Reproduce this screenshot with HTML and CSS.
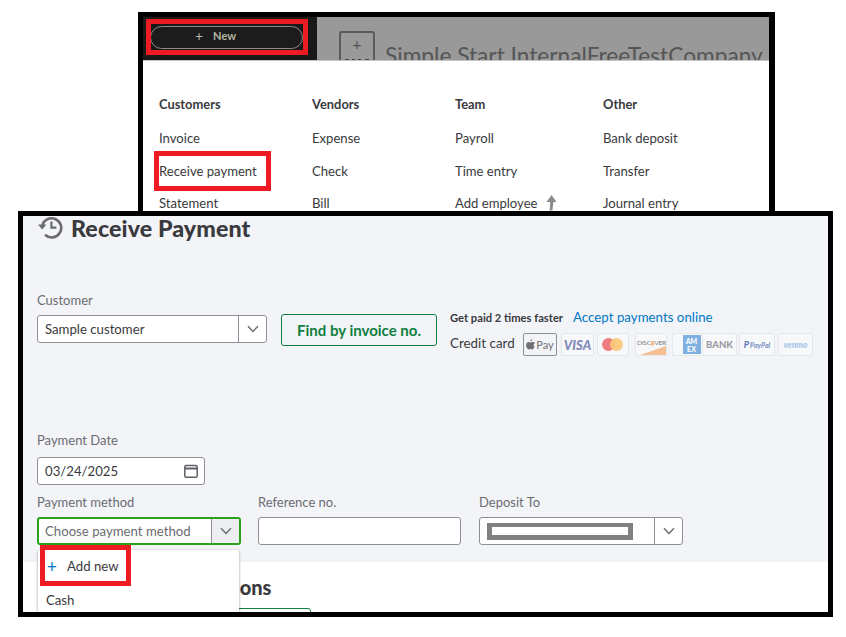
FILE: index.html
```html
<!DOCTYPE html>
<html lang="en">
<head>
<meta charset="utf-8">
<title>Receive Payment</title>
<link rel="stylesheet" href="styles.css">
</head>
<body>
<div class="canvas">
  <section class="window window-top">
    <header class="topbar">
      <div class="new-zone">
        <div class="new-pill"><span class="new-plus">+</span><span>New</span></div>
      </div>
      <div class="company-zone">
        <div class="logo-box"><span class="logo-plus">+</span><span class="logo-dots"></span></div>
        <div class="company-name">Simple Start InternalFreeTestCompany</div>
      </div>
    </header>
    <div class="menu">
      <div class="menu-col col-customers">
        <h3>Customers</h3>
        <p>Invoice</p><p>Receive payment</p><p>Statement</p>
      </div>
      <div class="menu-col col-vendors">
        <h3>Vendors</h3>
        <p>Expense</p><p>Check</p><p>Bill</p>
      </div>
      <div class="menu-col col-team">
        <h3>Team</h3>
        <p>Payroll</p><p>Time entry</p>
        <p class="with-arrow">Add employee
          <svg class="up-arrow" viewBox="0 0 12 16" width="12" height="16"><path d="M6.500 0 11.500 7H8.400L7.400 15.500H4.600L5.200 7H1.500Z" fill="#8b8b8b"/></svg>
        </p>
      </div>
      <div class="menu-col">
        <h3>Other</h3>
        <p>Bank deposit</p><p>Transfer</p><p>Journal entry</p>
      </div>
    </div>
    <div class="mark mark-new"></div>
    <div class="mark mark-receive"></div>
  </section>

  <section class="window window-bottom">
    <div class="form-area">
      <div class="title-row">
        <svg class="history" viewBox="0 0 26 26" width="26" height="26" fill="none" stroke="#6b6c72" stroke-width="2.600">
          <path d="M5.200 11A9.600 9.600 0 1 1 8 19.800"/>
          <path d="M1 9.500h8.400L5.200 14.600Z" fill="#6b6c72" stroke="none"/>
          <path d="M14.400 6.500v6.200h5" stroke-width="2.200"/>
        </svg>
        <h1>Receive Payment</h1>
      </div>

      <div class="row row-customer">
        <div class="field">
          <label>Customer</label>
          <div class="control select w230">
            <span class="value">Sample customer</span>
            <span class="caret"><svg viewBox="0 0 12 8" width="12" height="8"><path d="M1 1.200 6 6.400l5-5.200" fill="none" stroke="#6b6c72" stroke-width="1.400"/></svg></span>
          </div>
        </div>
        <button class="find-btn">Find by invoice no.</button>
        <div class="pay-info">
          <div class="pay-top"><span class="faster">Get paid 2 times faster</span><a class="accept">Accept payments online</a></div>
          <div class="pay-bottom">
            <span class="cc">Credit card</span>
            <div class="logos">
              <span class="card card-apple"><svg viewBox="0 0 10 12" width="9" height="11"><path d="M7 0c.100 1.300-1 2.500-2.200 2.500C4.600 1.300 5.800.100 7 0ZM9.600 8.500c-.600 1.500-1.500 3-2.600 3-.800 0-1.100-.500-2-.500s-1.200.500-2 .500C1.600 11.500.100 8.900.100 6.800c0-2.200 1.400-3.500 2.900-3.500.900 0 1.500.600 2.100.600.600 0 1.300-.700 2.400-.600.500 0 1.700.200 2.300 1.300-1.900 1.200-1.600 3.400-.200 3.900Z" fill="#6f7075"/></svg>Pay</span>
              <span class="card card-visa">VISA</span>
              <span class="card card-mc"><i class="mc-red"></i><i class="mc-yellow"></i></span>
              <span class="card card-disc">DISC<b class="dot"></b>VER<i class="disc-swoosh"></i></span>
              <span class="card card-amex"><i class="amex-box">AM<br>EX</i></span>
              <span class="card card-bank">BANK</span>
              <span class="card card-paypal"><b>P</b>PayPal</span>
              <span class="card card-venmo">venmo</span>
            </div>
          </div>
        </div>
      </div>

      <div class="field field-date">
        <label>Payment Date</label>
        <div class="control date">
          <span class="value">03/24/2025</span>
          <svg class="cal" viewBox="0 0 14 14" width="14" height="14" fill="none" stroke="#5f6066" stroke-width="1.500"><rect x=".800" y="1.500" width="12.400" height="11.700" rx="1.500"/><path d="M.800 4.500h12.400" stroke-width="2"/></svg>
        </div>
      </div>

      <div class="row row-method">
        <div class="field">
          <label>Payment method</label>
          <div class="control select focus w204">
            <span class="value muted">Choose payment method</span>
            <span class="caret caret-on"><svg viewBox="0 0 12 8" width="12" height="8"><path d="M1 1.200 6 6.400l5-5.200" fill="none" stroke="#6b6c72" stroke-width="1.400"/></svg></span>
          </div>
        </div>
        <div class="field">
          <label>Reference no.</label>
          <div class="control w203"></div>
        </div>
        <div class="field field-deposit">
          <label>Deposit To</label>
          <div class="control select w204">
            <span class="value"><span class="redact"></span></span>
            <span class="caret"><svg viewBox="0 0 12 8" width="12" height="8"><path d="M1 1.200 6 6.400l5-5.200" fill="none" stroke="#6b6c72" stroke-width="1.400"/></svg></span>
          </div>
        </div>
      </div>
    </div>

    <div class="lower">
      <h2>Outstanding Transactions</h2>
      <div class="lower-btn"></div>
    </div>

    <div class="dropdown">
      <div class="drop-item add"><span class="add-plus">+</span>Add new</div>
      <div class="drop-item">Cash</div>
    </div>
    <div class="mark mark-add"></div>
  </section>
</div>
</body>
</html>
```
FILE: styles.css
```css
* { box-sizing: border-box; }
html, body { margin: 0; padding: 0; background: #fff; }
body { font-family: "Lato", "Open Sans", sans-serif; color: #393a3d; }
.canvas { position: relative; width: 846px; height: 637px; overflow: hidden; }

.window { position: absolute; background: #fff; border-style: solid; border-color: #000; overflow: hidden; }
.window-top { left: 138px; top: 12px; width: 637px; height: 210px; border-width: 5px 6px 0 5px; }
.window-bottom { left: 18px; top: 211px; width: 815px; height: 406px; border-width: 5px; }

.mark { position: absolute; border: 5px solid #ed1c24; }
.mark-new { left: 3px; top: 2px; width: 162px; height: 36px; }
.mark-receive { left: 11px; top: 134px; width: 117px; height: 40px; }
.mark-add { left: 17px; top: 329px; width: 91px; height: 41px; }

/* top bar */
.topbar { display: flex; height: 44px; border-bottom: 1px solid #c4c4c4; }
.new-zone { width: 174px; background: #191919; padding: 9px 0 0 7px; }
.new-pill { width: 153px; height: 23px; border: 1.500px solid #8c8c8c; border-radius: 12px; background: #1c1c1c; color: #b5b5a5; font-size: 11px; font-weight: 700; display: flex; align-items: center; justify-content: center; gap: 10px; padding: 0 22px 4px 0; }
.new-plus { font-weight: 400; font-size: 14px; }
.company-zone { flex: 1; background: #999; display: flex; padding: 14px 0 0 22px; overflow: hidden; }
.logo-box { width: 36px; height: 40px; border: 2px solid #5b5b5b; border-radius: 3px; text-align: center; flex: none; color: #555; }
.logo-plus { display: block; font-size: 16px; line-height: 22px; }
.logo-dots { display: block; width: 24px; margin: 4px auto 0; border-top: 3px dotted #444; }
.company-name { margin-left: 10px; margin-top: 11px; font-size: 22.700px; line-height: 28px; color: #555; white-space: nowrap; }

/* quick-create menu */
.menu { display: flex; padding: 34px 0 0 16px; font-size: 13.100px; }
.menu-col { flex: none; }
.col-customers { width: 153px; }
.col-vendors { width: 143px; }
.col-team { width: 148px; }
.menu-col h3 { margin: 0 0 16px; font-size: 12.900px; font-weight: 700; line-height: 18px; }
.menu-col p { margin: 0; height: 32.500px; line-height: 18px; white-space: nowrap; }
.with-arrow { display: flex; align-items: flex-start; gap: 8px; }
.up-arrow { margin-top: 1px; }

/* form */
.form-area { height: 346px; background: #f3f4f8; padding: 0 0 0 14px; }
.title-row { display: flex; height: 75px; align-items: flex-start; }
.history { margin: -1px 7px 0 0; flex: none; }
h1 { margin: 0 0 0 1px; font-size: 23.200px; line-height: 25px; font-weight: 900; letter-spacing: .1px; }

.field label { display: block; font-size: 13px; line-height: 18px; color: #6b6c72; margin-bottom: 6px; white-space: nowrap; }
.control { height: 28px; background: #fff; border: 1px solid #8d9096; border-radius: 3px; display: flex; align-items: center; font-size: 13.200px; }
.select { overflow: hidden; }
.value { flex: 1; padding-left: 7px; white-space: nowrap; }
.muted { color: #6b6c72; padding-left: 6px; }
.caret { width: 28px; height: 100%; flex: none; border-left: 1px solid #8d9096; display: flex; align-items: center; justify-content: center; }
.caret-on { background: #eceef1; }
.focus { border: 2px solid #2ca01c; }
.w230 { width: 230px; }
.w204 { width: 204px; }
.w203 { width: 203px; }

.row { display: flex; }
.row-customer { height: 140px; align-items: flex-start; }
.find-btn { margin: 23px 0 0 14px; width: 156px; height: 32px; background: transparent; border: 1px solid #0f8040; border-radius: 3px; color: #0f8040; font: 700 15px "Lato", sans-serif; padding: 0; }
.pay-info { margin: 18px 0 0 13px; }
.pay-top { display: flex; align-items: baseline; height: 24px; gap: 10px; }
.faster { font-size: 11.200px; font-weight: 700; color: #393a3d; white-space: nowrap; }
.accept { font-size: 13.300px; color: #0077c5; white-space: nowrap; }
.pay-bottom { display: flex; align-items: flex-start; }
.cc { font-size: 13.400px; line-height: 18px; margin-top: 1px; width: 73px; flex: none; white-space: nowrap; }
.logos { display: flex; height: 23px; }
.card { position: relative; width: 34px; height: 23px; flex: none; margin-right: 4px; background: #f7f8fa; border: 1px solid #e6e7ea; border-radius: 2px; display: flex; align-items: center; justify-content: center; overflow: hidden; font-size: 9px; }
.card-apple { border-color: #8d9096; background: #f3f4f8; color: #6f7075; font-size: 11px; gap: 1px; }
.card-visa { margin-right: 3px; color: #8088b8; font-size: 13px; font-weight: 900; font-style: italic; width: 33px; }
.card-mc { margin-right: 6px; width: 32px; }
.mc-red, .mc-yellow { position: absolute; top: 4px; width: 13px; height: 13px; border-radius: 50%; }
.mc-red { left: 4px; background: #ef7c7e; }
.mc-yellow { left: 12px; background: #f8c877; opacity: .92; }
.card-disc { margin-right: 5px; width: 32px; font-size: 6.500px; color: #77787c; justify-content: flex-start; padding: 5px 0 0 1px; letter-spacing: -.2px; align-items: flex-start; }
.dot { display: inline-block; width: 5px; height: 5px; border-radius: 50%; background: #f6b483; margin-top: 2px; }
.disc-swoosh { position: absolute; right: 0; bottom: 0; width: 26px; height: 9px; background: #f6bf93; clip-path: polygon(100% 0, 100% 100%, 0 100%); }
.card-amex { margin-right: 0; width: 30px; border-right: 0; justify-content: center; padding-left: 8px; }
.amex-box { width: 18px; height: 19px; background: #7fb0e0; color: #fff; font-size: 7px; font-style: normal; font-weight: 900; line-height: 8px; text-align: center; padding-top: 2px; }
.card-bank { width: 35px; color: #9a9ba0; font-size: 9.500px; font-weight: 900; margin-right: 2px; }
.card-paypal { width: 36px; margin-right: 3px; color: #8297c5; font-size: 7px; font-weight: 900; font-style: italic; }
.card-paypal b { color: #5f7bb5; font-size: 9px; margin-right: 1px; }
.card-venmo { width: 35px; margin-right: 0; color: #a6c6e6; font-size: 8.500px; font-weight: 900; font-style: italic; }

.field-date { height: 62px; }
.field-date label { margin-bottom: 8px; }
.date { width: 168px; padding-right: 6px; }
.cal { flex: none; }
.row-method { gap: 17px; }
.field-deposit { margin-left: 1px; }
.redact { display: block; width: 146px; height: 17px; border: 5px solid #808080; border-width: 4px 5px 5px; background: #fff; }

/* below the form */
.lower { position: relative; padding: 13px 0 0 20px; }
h2 { margin: 0; font-size: 20px; line-height: 24px; font-weight: 900; white-space: nowrap; }
.lower-btn { position: absolute; left: 120px; top: 46px; width: 168px; height: 20px; border: 1px solid #0f8040; border-radius: 3px; }

.dropdown { position: absolute; left: 15px; top: 334px; width: 201px; height: 90px; background: #fff; border-radius: 3px; box-shadow: 0 1px 3px rgba(0,0,0,.4); font-size: 13.200px; z-index: 1; }
.drop-item { height: 32px; display: flex; align-items: center; padding-left: 8px; white-space: nowrap; }
.add { height: 32px; margin-bottom: 2px; padding-left: 9px; }
.add-plus { color: #0077c5; font-size: 17px; width: 20px; }
.mark-add { z-index: 2; }
```
